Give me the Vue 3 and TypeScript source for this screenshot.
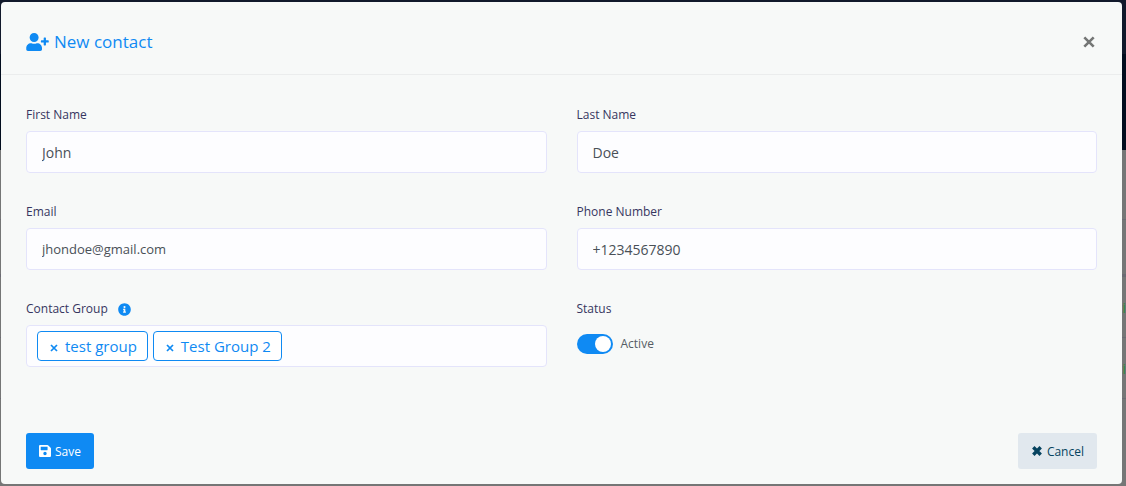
<script setup lang="ts">
import { ref } from 'vue'

interface Group {
  id: number
  name: string
}

const firstName = ref('John')
const lastName = ref('Doe')
const email = ref('jhondoe@gmail.com')
const phone = ref('+1234567890')
const active = ref(true)
const groups = ref<Group[]>([
  { id: 1, name: 'test group' },
  { id: 2, name: 'Test Group 2' },
])

function removeGroup(id: number) {
  groups.value = groups.value.filter((g) => g.id !== id)
}
</script>

<template>
  <div class="page">
    <div class="backdrop" aria-hidden="true">
      <div class="hero-top"></div>
      <div class="hero"></div>
      <div class="rows">
        <div class="row"></div>
        <div class="row head-row"></div>
        <div class="row"><span>ci</span></div>
        <div class="row"><span>ci</span></div>
      </div>
    </div>

    <form class="modal" role="dialog" aria-labelledby="dialog-title" @submit.prevent>
      <header class="head">
        <h1 id="dialog-title" class="title">
          <svg class="user-icon" viewBox="0 0 640 512" aria-hidden="true">
            <path d="M624 208h-64v-64c0-9-7-16-16-16h-32c-9 0-16 7-16 16v64h-64c-9 0-16 7-16 16v32c0 9 7 16 16 16h64v64c0 9 7 16 16 16h32c9 0 16-7 16-16v-64h64c9 0 16-7 16-16v-32c0-9-7-16-16-16zM224 256c71 0 128-57 128-128S295 0 224 0 96 57 96 128s57 128 128 128zm90 32h-17c-22 10-47 16-73 16s-51-6-73-16h-17C60 288 0 348 0 422v42c0 27 21 48 48 48h352c27 0 48-21 48-48v-42c0-74-60-134-134-134z" />
          </svg>
          New contact
        </h1>
        <button class="close" type="button" aria-label="Close">
          <svg viewBox="0 0 12 12" aria-hidden="true"><path d="M1.3 1.3l9.4 9.4M10.7 1.3l-9.4 9.4" /></svg>
        </button>
      </header>

      <div class="fields">
        <div class="field">
          <label for="first-name">First Name</label>
          <input id="first-name" v-model="firstName" class="control" type="text" />
        </div>
        <div class="field">
          <label for="last-name">Last Name</label>
          <input id="last-name" v-model="lastName" class="control" type="text" />
        </div>
        <div class="field">
          <label for="email">Email</label>
          <input id="email" v-model="email" class="control email" type="email" />
        </div>
        <div class="field">
          <label for="phone">Phone Number</label>
          <input id="phone" v-model="phone" class="control" type="tel" />
        </div>
        <div class="field">
          <label for="group-search">
            Contact Group
            <svg class="info-icon" viewBox="0 0 512 512" aria-hidden="true">
              <path fill-rule="evenodd" d="M256 8C119 8 8 119 8 256s111 248 248 248 248-111 248-248S393 8 256 8zm0 110a42 42 0 1 1 0 84 42 42 0 0 1 0-84zm56 254c0 7-5 12-12 12h-88c-7 0-12-5-12-12v-24c0-7 5-12 12-12h12v-64h-12c-7 0-12-5-12-12v-24c0-7 5-12 12-12h64c7 0 12 5 12 12v100h12c7 0 12 5 12 12v24z" />
            </svg>
          </label>
          <div class="control tags">
            <span v-for="group in groups" :key="group.id" class="tag">
              <button type="button" :aria-label="`Remove ${group.name}`" @click="removeGroup(group.id)">
                <svg viewBox="0 0 12 12" aria-hidden="true"><path d="M1.5 1.5l9 9M10.5 1.5l-9 9" /></svg>
              </button>
              {{ group.name }}
            </span>
            <input id="group-search" class="search" type="text" />
          </div>
        </div>
        <div class="field">
          <label for="status">Status</label>
          <div class="status">
            <input id="status" v-model="active" class="switch" type="checkbox" role="switch" />
            <label class="state" for="status">Active</label>
          </div>
        </div>
      </div>

      <footer class="foot">
        <button class="btn save" type="submit">
          <svg viewBox="0 0 448 448" aria-hidden="true">
            <path fill-rule="evenodd" d="M434 98L350 14A48 48 0 0 0 316 0H48C21 0 0 21 0 48v352c0 27 21 48 48 48h352c27 0 48-21 48-48V132c0-13-5-25-14-34zM224 384a64 64 0 1 1 0-128 64 64 0 0 1 0 128zm96-305v101c0 7-5 12-12 12H76c-7 0-12-5-12-12V76c0-7 5-12 12-12h229c9 0 15 6 15 15z" />
          </svg>
          Save
        </button>
        <button class="btn cancel" type="button">
          <svg class="cross" viewBox="0 0 12 12" aria-hidden="true"><path d="M2.3 2.3l7.4 7.4M9.7 2.3l-7.4 7.4" /></svg>
          Cancel
        </button>
      </footer>
    </form>
  </div>
</template>

<style>
body {
  background: #757575;
}
</style>

<style scoped>
.page {
  position: relative;
  min-height: 100vh;
  box-sizing: border-box;
  padding: 2px 4px 2px 1px;
  font-family: "Open Sans", "Noto Sans", sans-serif;
  font-size: 14px;
}
.backdrop {
  position: absolute;
  inset: 0;
  overflow: hidden;
  background: #757676;
}
.hero-top {
  height: 54px;
  background: #11192b;
}
.hero {
  height: 96px;
  background: #020d1e;
}
.rows {
  padding-top: 9px;
}
.row {
  box-sizing: border-box;
  height: 61px;
  border-bottom: 1px solid #6b6b73;
  display: flex;
  align-items: center;
  justify-content: flex-end;
  color: #2f8b3c;
  font-size: 14px;
}
.head-row {
  height: 57px;
  border-bottom-width: 3px;
}
.modal {
  position: relative;
  border-radius: 4px;
  background: #f7f9f8;
  overflow: hidden;
}
.head {
  display: flex;
  align-items: center;
  justify-content: space-between;
  padding: 28px 25px 20px;
  border-bottom: 1px solid #ebeded;
}
.title {
  display: flex;
  align-items: center;
  gap: 5px;
  margin: 0;
  color: #0f8af3;
  font-size: 17px;
  font-weight: 400;
  line-height: 24px;
}
.user-icon {
  width: 23px;
  height: 18px;
  fill: currentColor;
}
.close,
.tag button {
  display: flex;
  margin: 0;
  padding: 0;
  border: 0;
  background: none;
  color: #757776;
}
.close {
  padding: 0 2px;
}
.close svg {
  width: 12px;
  height: 12px;
}
.close path,
.tag path,
.cross path {
  fill: none;
  stroke: currentColor;
  stroke-width: 2.6;
}
.fields {
  display: grid;
  grid-template-columns: 1fr 1fr;
  gap: 29px 30px;
  padding: 30px 25px 0;
}
.field {
  display: flex;
  flex-direction: column;
  gap: 6px;
  min-width: 0;
}
.field label {
  display: flex;
  align-items: center;
  gap: 10px;
  color: #36365f;
  font-size: 12px;
  line-height: 20px;
}
.info-icon {
  width: 13px;
  height: 13px;
  fill: #0f8af3;
}
.control {
  box-sizing: border-box;
  width: 100%;
  height: 42px;
  padding: 0 15px;
  border: 1px solid #e4e4fb;
  border-radius: 4px;
  background: #fdfdff;
  color: #495057;
  font: inherit;
}
.email {
  font-size: 13px;
}
.tags {
  display: flex;
  align-items: center;
  gap: 5px;
  padding: 0 10px;
}
.tag {
  display: flex;
  align-items: center;
  gap: 7px;
  flex: none;
  padding: 0 10px 0 12px;
  border: 1px solid #0f8af3;
  border-radius: 4px;
  background: #fff;
  color: #0f8af3;
  font-size: 15px;
  line-height: 28px;
}
.tag button {
  color: inherit;
  padding-top: 3px;
}
.tag svg {
  width: 8px;
  height: 8px;
}
.search {
  flex: 1;
  min-width: 0;
  border: 0;
  outline: 0;
  background: none;
  font: inherit;
}
.status {
  display: flex;
  align-items: center;
  gap: 8px;
  padding-top: 9px;
}
.field .state {
  color: #565d64;
}
.switch {
  appearance: none;
  display: flex;
  justify-content: flex-start;
  box-sizing: border-box;
  width: 36px;
  height: 20px;
  margin: 0;
  padding: 2px;
  border-radius: 10px;
  background: #adb5bd;
}
.switch::before {
  content: "";
  width: 16px;
  height: 16px;
  border-radius: 50%;
  background: #fff;
}
.switch:checked {
  justify-content: flex-end;
  background: #0f8af3;
}
.foot {
  display: flex;
  justify-content: space-between;
  padding: 66px 25px 15px;
}
.btn {
  display: flex;
  align-items: center;
  gap: 4px;
  height: 36px;
  padding: 0 13px;
  border: 0;
  border-radius: 3px;
  font: inherit;
  font-size: 12px;
}
.btn svg {
  width: 12px;
  height: 12px;
  fill: currentColor;
}
.save {
  background: #0f8af3;
  color: #fff;
}
.cancel {
  background: #e1e8ee;
  color: #06435f;
}
.cross path {
  stroke-width: 3.4;
}
</style>
